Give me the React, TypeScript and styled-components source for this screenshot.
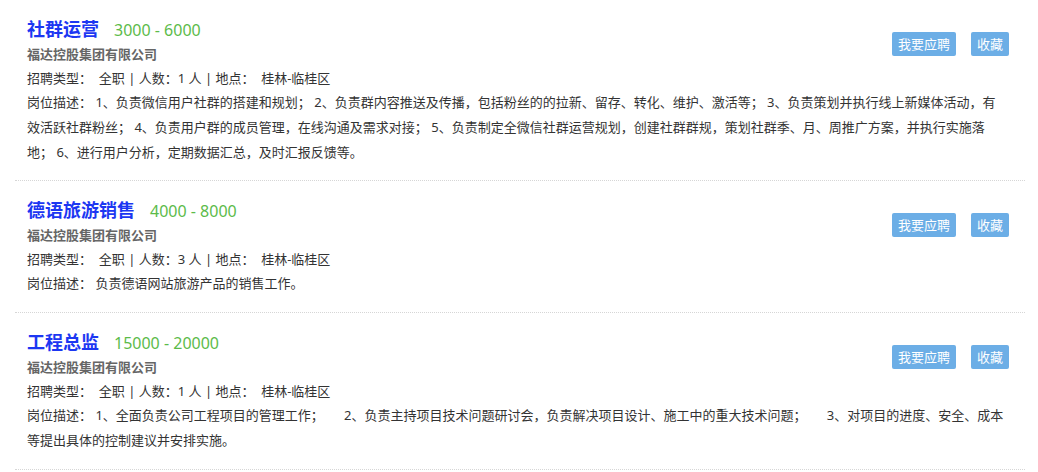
import React from "react";
import styled, { createGlobalStyle } from "styled-components";

const GlobalStyle = createGlobalStyle`
  body {
    margin: 0;
    background: #fff;
    font-family: "Noto Sans", "Noto Sans CJK SC", sans-serif;
    color: #333;
  }
`;

const jobs = [
  {
    title: "社群运营",
    salary: "3000 - 6000",
    company: "福达控股集团有限公司",
    type: "全职",
    count: 1,
    place: "桂林-临桂区",
    desc:
      "1、负责微信用户社群的搭建和规划； 2、负责群内容推送及传播，包括粉丝的的拉新、留存、转化、维护、激活等； 3、负责策划并执行线上新媒体活动，有效活跃社群粉丝； 4、负责用户群的成员管理，在线沟通及需求对接； 5、负责制定全微信社群运营规划，创建社群群规，策划社群季、月、周推广方案，并执行实施落地； 6、进行用户分析，定期数据汇总，及时汇报反馈等。",
  },
  {
    title: "德语旅游销售",
    salary: "4000 - 8000",
    company: "福达控股集团有限公司",
    type: "全职",
    count: 3,
    place: "桂林-临桂区",
    desc: "负责德语网站旅游产品的销售工作。",
  },
  {
    title: "工程总监",
    salary: "15000 - 20000",
    company: "福达控股集团有限公司",
    type: "全职",
    count: 1,
    place: "桂林-临桂区",
    desc:
      "1、全面负责公司工程项目的管理工作；\u00a0\u00a0\u00a0\u00a0\u00a0 2、负责主持项目技术问题研讨会，负责解决项目设计、施工中的重大技术问题；\u00a0\u00a0\u00a0\u00a0\u00a0 3、对项目的进度、安全、成本等提出具体的控制建议并安排实施。",
  },
];

const App = () => {
  return (
    <>
      <GlobalStyle />
      <JobList>
        {jobs.map((job) => (
          <JobItem key={job.title}>
            <HeaderRow>
              <InfoColumn>
                <TitleLine>
                  <Title>{job.title}</Title>
                  <Salary>{job.salary}</Salary>
                </TitleLine>
                <Company>{job.company}</Company>
                <Meta>
                  {`招聘类型：\u00a0 ${job.type} | 人数：${job.count} 人 | 地点：\u00a0 ${job.place}`}
                </Meta>
              </InfoColumn>
              <Actions>
                <ActionButton>我要应聘</ActionButton>
                <ActionButton>收藏</ActionButton>
              </Actions>
            </HeaderRow>
            <Desc>{`岗位描述： ${job.desc}`}</Desc>
          </JobItem>
        ))}
      </JobList>
    </>
  );
};

const JobList = styled.div`
  margin-left: 15px;
  width: 1010px;
`;
const JobItem = styled.div`
  padding: 16px 12px 15px;
  border-bottom: 1px dotted #d6d6d6;
  &:nth-child(n + 2) {
    padding-bottom: 16px;
  }
`;
const HeaderRow = styled.div`
  display: flex;
  flex-direction: row;
  justify-content: space-between;
  align-items: flex-start;
`;
const InfoColumn = styled.div`
  display: flex;
  flex-direction: column;
`;
const TitleLine = styled.div`
  display: flex;
  flex-direction: row;
  align-items: baseline;
  height: 26px;
  line-height: 26px;
`;
const Title = styled.span`
  font-size: 18px;
  font-weight: bold;
  color: #1c37f2;
`;
const Salary = styled.span`
  margin-left: 15px;
  font-size: 16px;
  color: #5cbb4a;
`;
const Company = styled.div`
  font-size: 13px;
  line-height: 24px;
  font-weight: bold;
  color: #666;
`;
const Meta = styled.div`
  font-size: 13px;
  line-height: 24px;
  color: #333;
`;
const Actions = styled.div`
  display: flex;
  flex-direction: row;
  gap: 15px;
  margin-top: 16px;
  margin-right: 4px;
`;
const ActionButton = styled.button`
  height: 24px;
  padding: 0 6px;
  border: none;
  border-radius: 2px;
  background: #6caee6;
  color: #fff;
  font-family: "Noto Sans CJK SC", sans-serif;
  font-size: 13px;
  line-height: 24px;
  cursor: pointer;
`;
const Desc = styled.div`
  padding-right: 5px;
  font-size: 13px;
  line-height: 25px;
  color: #333;
  word-break: break-all;
`;

export default App;
